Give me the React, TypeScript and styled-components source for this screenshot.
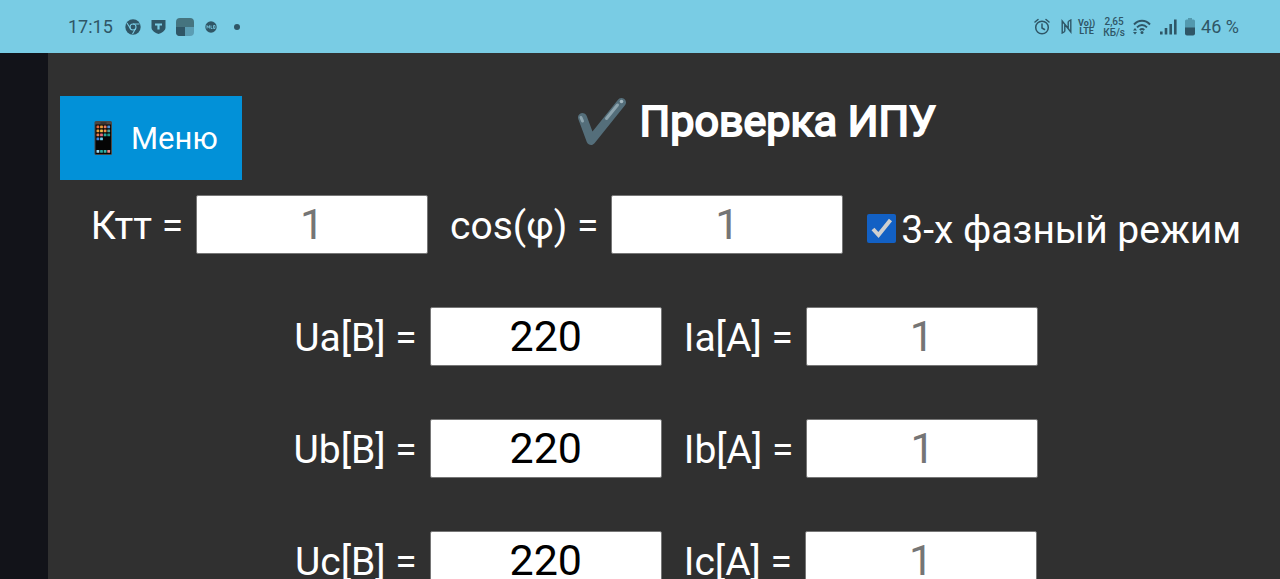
import React from "react";
import styled, { createGlobalStyle } from "styled-components";

const INK = "#2f5666";

const GlobalStyle = createGlobalStyle`
  * { box-sizing: border-box; }
  body { margin: 0; background: #303030; font-family: Roboto, "Liberation Sans", sans-serif; }
`;

const Screen = styled.div`
  height: 100vh;
  display: flex;
  flex-direction: column;
  overflow: hidden;
`;

const StatusBar = styled.header`
  flex: none;
  height: 53px;
  padding: 0 41px 0 68px;
  display: flex;
  align-items: center;
  justify-content: space-between;
  background: #79cce4;
  color: ${INK};
  font-size: 18px;
`;

const StatusGroup = styled.div<{ $gap: number }>`
  display: flex;
  align-items: center;
  gap: ${(p) => p.$gap}px;
`;

const Clock = styled.span`
  margin-right: 2px;
`;

const Stacked = styled.span<{ $bold?: boolean }>`
  display: flex;
  flex-direction: column;
  text-align: center;
  min-width: ${(p) => (p.$bold ? 16 : 26)}px;
  font-size: ${(p) => (p.$bold ? 9 : 10)}px;
  font-weight: ${(p) => (p.$bold ? 700 : 500)};
  line-height: ${(p) => (p.$bold ? 8 : 11)}px;
`;

const Body = styled.div`
  flex: 1;
  min-height: 0;
  display: flex;
`;

const Cutout = styled.div`
  flex: none;
  width: 48px;
  background: #121319;
`;

const Content = styled.main`
  flex: 1;
  min-width: 0;
  padding: 43px 8px 0 12px;
  color: #fff;
`;

const TitleRow = styled.div`
  display: flex;
  align-items: flex-start;
`;

const MenuButton = styled.button`
  flex: none;
  height: 84px;
  padding: 0 24px;
  display: flex;
  align-items: center;
  gap: 8px;
  border: 0;
  background: #0291d8;
  color: #fff;
  font-family: inherit;
  font-size: 31px;
`;

const Title = styled.h1`
  flex: 1;
  margin: 0;
  display: flex;
  justify-content: center;
  align-items: center;
  gap: 14px;
  font-size: 43px;
  line-height: 50px;
  font-weight: 400;
  -webkit-text-stroke: 2px #fff;
`;

const Form = styled.form`
  display: flex;
  flex-direction: column;
  gap: 53px;
  padding-top: 15px;
`;

const Row = styled.div`
  display: flex;
  justify-content: center;
  gap: 22px;
  white-space: nowrap;
`;

const Field = styled.label`
  display: flex;
  align-items: baseline;
  gap: 13px;
  font-size: 39px;
  line-height: 48px;
`;

const NumberInput = styled.input`
  width: 232px;
  height: 59px;
  padding: 0 0 2px;
  border: 1px solid #767676;
  border-radius: 2px;
  background: #fff;
  color: #000;
  font-family: inherit;
  font-size: 43px;
  text-align: center;
  &::placeholder { color: #757575; }
`;

const CheckField = styled.label`
  display: flex;
  align-items: center;
  gap: 5px;
  padding: 11px 0 0 2px;
  font-size: 39px;
  line-height: 48px;
`;

const CheckBox = styled.input`
  appearance: none;
  flex: none;
  width: 29px;
  height: 29px;
  margin: 0 0 4px;
  border-radius: 2px;
  background: #1260c4;
  &:checked {
    background: #1260c4
      url("data:image/svg+xml,%3Csvg xmlns='http://www.w3.org/2000/svg' viewBox='0 0 29 29'%3E%3Cpath d='M6 15l5.500 6L23.500 6' fill='none' stroke='%23cfcfcf' stroke-width='4'/%3E%3C/svg%3E")
      center / 29px 29px no-repeat;
  }
`;

const ChromeIcon = () => (
  <svg width="16" height="16" viewBox="0 0 16 16">
    <circle cx="8" cy="8" r="7.700" fill={INK} />
    <circle cx="8" cy="8" r="3" fill="none" stroke="#79cce4" strokeWidth="1.100" />
    <path d="M8 5h6.500M5.400 9.500L2 4M10.600 9.500L7.500 15" stroke="#79cce4" strokeWidth="1.100" />
  </svg>
);

const ShieldIcon = () => (
  <svg width="15" height="16" viewBox="0 0 15 16">
    <path d="M0.500 1h14v7.500c0 3.200-3.500 5.200-7 6.500c-3.500-1.300-7-3.300-7-6.500z" fill={INK} />
    <path d="M4 4.500h7v2H8.600v4H6.400v-4H4z" fill="#79cce4" />
  </svg>
);

const TileIcon = () => (
  <svg width="18" height="18" viewBox="0 0 18 18">
    <path d="M4 0h10a4 4 0 0 1 4 4v5H9v9H4a4 4 0 0 1-4-4V4a4 4 0 0 1 4-4z" fill="#45747f" />
    <path d="M0 9h9v9H4a4 4 0 0 1-4-4z" fill={INK} />
    <path d="M9 9h9v5a4 4 0 0 1-4 4H9z" fill="#5b9db3" />
  </svg>
);

const BadgeIcon = () => (
  <svg width="14" height="12" viewBox="-1 0 14 12">
    <circle cx="6" cy="6" r="5.700" fill={INK} />
    <path d="M2 7.500v-3l1.300 2l1.300-2v3M6 4.500v3h1.500M8.500 4.500h1.500v3H8.500z" fill="none" stroke="#79cce4" strokeWidth="0.800" />
  </svg>
);

const DotIcon = () => (
  <svg width="16" height="6" viewBox="-6 0 16 6">
    <circle cx="3" cy="3" r="3" fill={INK} />
  </svg>
);

const AlarmIcon = () => (
  <svg width="21" height="17" viewBox="0 0 21 17" fill="none" stroke={INK} strokeWidth="1.500" strokeLinecap="round">
    <circle cx="8" cy="9.500" r="6.300" />
    <path d="M8 6v4l2.500 1.500M1 4l3-2.500M15 4l-3-2.500" />
  </svg>
);

const NfcIcon = () => (
  <svg width="11" height="15" viewBox="0 0 11 15" fill="none" stroke={INK} strokeWidth="1.400">
    <path d="M3.800 12.500L1.200 14V2L8 10.500M3.800 5v7.500M7.200 2.500L9.800 1v12L3.500 5M7.200 2.500v7" />
  </svg>
);

const WifiIcon = () => (
  <svg width="21" height="16" viewBox="0 0 21 16" fill="none" stroke={INK} strokeWidth="1.900">
    <path d="M1 5.500C5.500 0.500 12.500 0.500 17 5.500M4 8.300c3-3 7-3 10 0M6.800 11c1.500-1.400 3-1.400 4.500 0" />
    <circle cx="9" cy="13.500" r="1.500" fill={INK} stroke="none" />
    <path d="M0 11.500L2 9l2 2.500zM0 13h4l-2 2.500z" fill={INK} stroke="none" />
  </svg>
);

const SignalIcon = () => (
  <svg width="19" height="16" viewBox="0 0 19 16" fill={INK}>
    <path d="M0 12.500h2.600V15.500H0zM4.700 9h2.600v6.500H4.700zM9.400 5H12v10.500H9.400zM14 0.500h2.600v15H14z" />
  </svg>
);

const BatteryIcon = () => (
  <svg width="10" height="18" viewBox="0 0 10 18">
    <path d="M3 0h4v1.500h1.500a1.500 1.500 0 0 1 1.500 1.500V10H0V3a1.500 1.500 0 0 1 1.500-1.500H3z" fill="#5399ae" />
    <path d="M0 9.500h10v6a2 2 0 0 1-2 2H2a2 2 0 0 1-2-2z" fill={INK} />
  </svg>
);

const APP_COLORS = ["#e8663c", "#e9a13b", "#e9795d", "#4d8fd6", "#e9a13b", "#f0c04a", "#ef8f4a", "#4fa39b", "#ea7a4c", "#e46c7a", "#29a69a", "#1b9a8a", "#3d86e0", "#6fd0ee"];
const DOCK_COLORS = ["#9adcf4", "#27aaa0", "#33b5a5", "#ef8b8b"];

const PhoneIcon = () => (
  <svg width="39" height="40" viewBox="0 0 39 40">
    <rect x="10.500" y="3" width="17.500" height="34" rx="1.500" fill="#4c4744" />
    <rect x="11.500" y="6.500" width="15.500" height="29.500" fill="#050505" />
    <rect x="16.500" y="4.500" width="6" height="1" fill="#222" />
    {APP_COLORS.map((c, i) => (
      <rect key={i} x={12.500 + (i % 4) * 3.600} y={7.500 + Math.floor(i / 4) * 4} width="2.800" height="2.800" rx="0.500" fill={c} />
    ))}
    {DOCK_COLORS.map((c, i) => (
      <rect key={i} x={12.500 + i * 3.600} y="32" width="2.800" height="2.800" rx="0.500" fill={c} />
    ))}
  </svg>
);

const CheckIcon = () => (
  <svg width="48" height="50" viewBox="0 -1 48 50" fill="none" strokeLinecap="round" strokeLinejoin="round">
    <path d="M4.500 20.500L13 43.500L43.500 5.500" stroke="#546e7a" strokeWidth="9" />
    <path d="M28.500 21.500L39.500 8" stroke="#8da4ae" strokeWidth="3" />
    <path d="M3 20.500L4.500 24" stroke="#8da4ae" strokeWidth="3" />
    <circle cx="43.500" cy="4.500" r="1.800" fill="#a5b8c0" />
  </svg>
);

const PHASES = ["a", "b", "c"];

export default function App() {
  return (
    <>
      <GlobalStyle />
      <Screen>
        <StatusBar>
          <StatusGroup $gap={10}>
            <Clock>17:15</Clock>
            <ChromeIcon />
            <ShieldIcon />
            <TileIcon />
            <BadgeIcon />
            <DotIcon />
          </StatusGroup>
          <StatusGroup $gap={6}>
            <AlarmIcon />
            <NfcIcon />
            <Stacked $bold>
              <span>Vo))</span>
              <span>LTE</span>
            </Stacked>
            <Stacked>
              <span>2,65</span>
              <span>КБ/s</span>
            </Stacked>
            <WifiIcon />
            <SignalIcon />
            <BatteryIcon />
            <span>46 %</span>
          </StatusGroup>
        </StatusBar>
        <Body>
          <Cutout />
          <Content>
            <TitleRow>
              <MenuButton type="button">
                <PhoneIcon />
                Меню
              </MenuButton>
              <Title>
                <CheckIcon />
                Проверка ИПУ
              </Title>
            </TitleRow>
            <Form>
              <Row>
                <Field>
                  Ктт =
                  <NumberInput placeholder="1" />
                </Field>
                <Field>
                  cos(φ) =
                  <NumberInput placeholder="1" />
                </Field>
                <CheckField>
                  <CheckBox type="checkbox" defaultChecked />
                  3-х фазный режим
                </CheckField>
              </Row>
              {PHASES.map((p) => (
                <Row key={p}>
                  <Field>
                    U{p}[В] =
                    <NumberInput defaultValue="220" />
                  </Field>
                  <Field>
                    I{p}[А] =
                    <NumberInput placeholder="1" />
                  </Field>
                </Row>
              ))}
            </Form>
          </Content>
        </Body>
      </Screen>
    </>
  );
}
